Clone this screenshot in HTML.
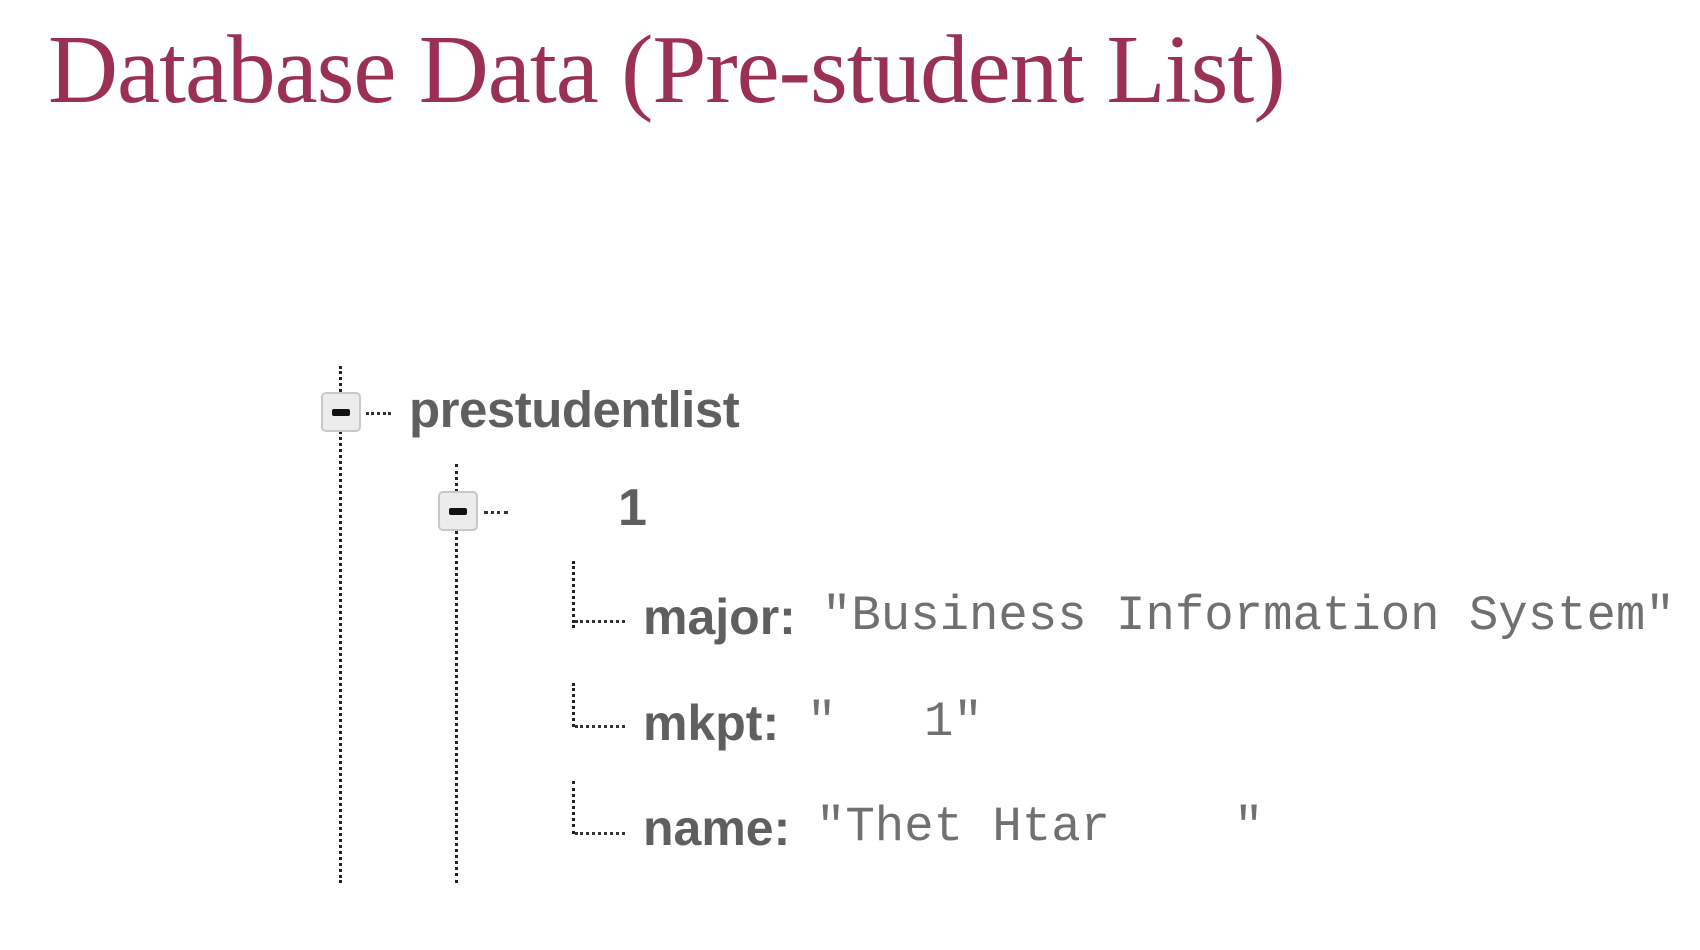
<!DOCTYPE html>
<html><head><meta charset="utf-8"><style>
html,body{margin:0;padding:0;background:#fff;width:1700px;height:950px;overflow:hidden;position:relative}
.t{position:absolute;line-height:1;white-space:pre}
.title{font-family:"Liberation Serif",serif;color:#9b3152;font-size:97px;left:48px;top:21px;letter-spacing:-1px}
.b{font-family:"Liberation Sans",sans-serif;font-weight:bold;color:#5f5f5f}
.m{font-family:"Liberation Mono",monospace;color:#707070;font-size:49px}
.v{position:absolute;border-left:3px dotted #222;width:0}
.h{position:absolute;border-top:3px dotted #333;height:0}
.box{position:absolute;width:36px;height:36px;border:2px solid #c8c8c8;border-radius:5px;background:#ececec}
.box:after{content:"";position:absolute;left:9px;top:15px;width:18px;height:7px;background:#111;border-radius:2px}
</style></head><body>
<div class="t title">Database Data (Pre-student List)</div>

<div class="v" style="left:339px;top:366px;height:517px"></div>
<div class="box" style="left:321px;top:392px"></div>
<div class="h" style="left:366px;top:412px;width:25px"></div>
<div class="t b" style="left:409px;top:384px;font-size:51px;letter-spacing:-0.5px">prestudentlist</div>

<div class="v" style="left:455px;top:464px;height:419px"></div>
<div class="box" style="left:438px;top:491px"></div>
<div class="h" style="left:484px;top:511px;width:24px"></div>
<div class="t b" style="left:618px;top:482px;font-size:52px">1</div>

<div class="v" style="left:572px;top:561px;height:67px"></div>
<div class="v" style="left:572px;top:683px;height:44px"></div>
<div class="v" style="left:572px;top:781px;height:53px"></div>
<div class="h" style="left:575px;top:620px;width:50px"></div>
<div class="h" style="left:575px;top:725px;width:50px"></div>
<div class="h" style="left:575px;top:832px;width:50px"></div>

<div class="t b" style="left:643px;top:592px;font-size:50px">major:</div>
<div class="t m" style="left:822px;top:592px">"Business Information System"</div>
<div class="t b" style="left:643px;top:698px;font-size:50px">mkpt:</div>
<div class="t m" style="left:807px;top:698px">"</div>
<div class="t m" style="left:924px;top:698px">1"</div>
<div class="t b" style="left:643px;top:803px;font-size:50px">name:</div>
<div class="t m" style="left:816px;top:803px">"Thet Htar</div>
<div class="t m" style="left:1234px;top:803px">"</div>
</body></html>
